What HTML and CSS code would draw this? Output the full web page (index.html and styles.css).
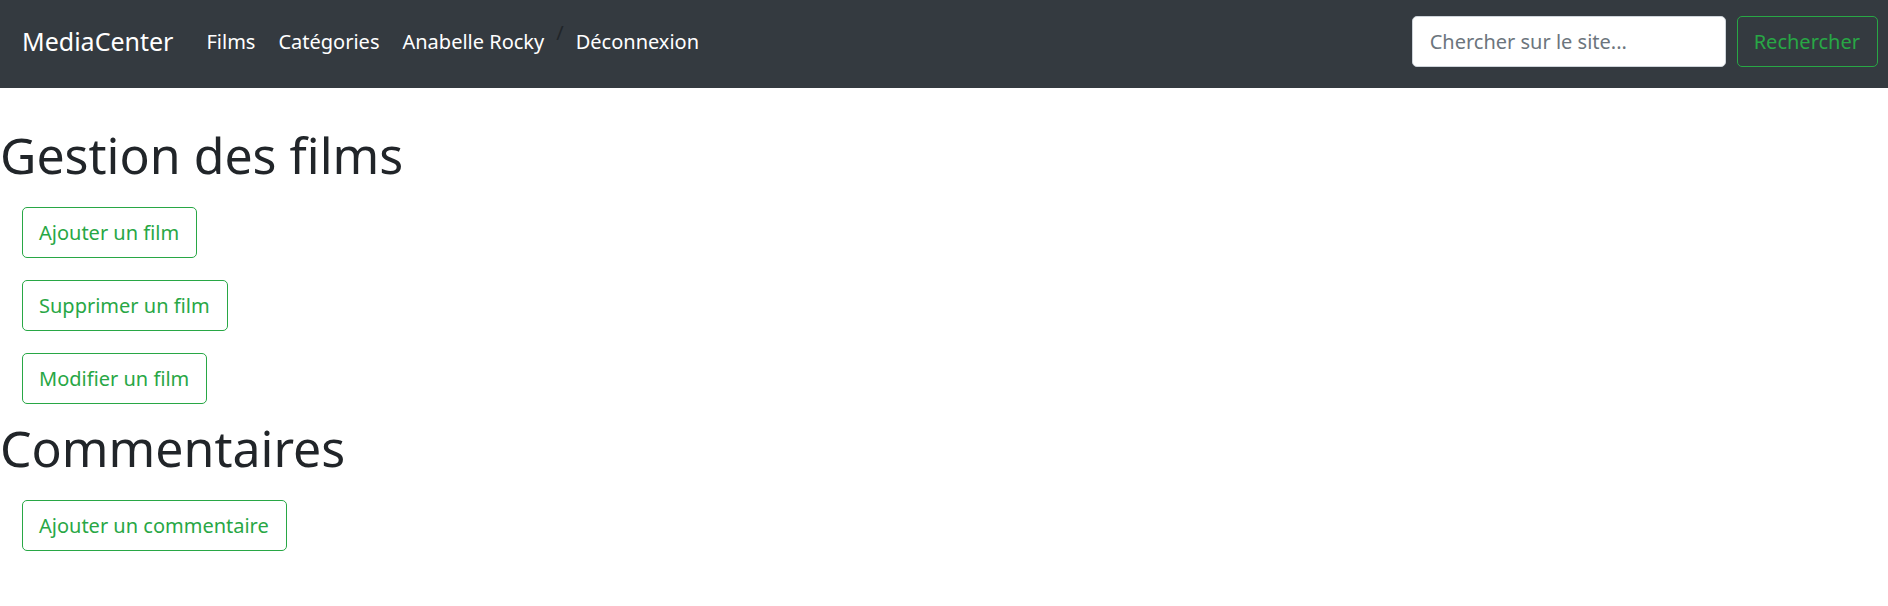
FILE: index.html
```html
<!DOCTYPE html>
<html lang="fr">
<head>
<meta charset="utf-8">
<meta name="viewport" content="width=device-width, initial-scale=1">
<title>MediaCenter</title>
<link rel="stylesheet" href="styles.css">
</head>
<body>
<nav class="navbar">
  <a class="brand" href="#">MediaCenter</a>
  <ul class="nav-list">
    <li><a class="nav-link" href="#">Films</a></li>
    <li><a class="nav-link" href="#">Catégories</a></li>
    <li><a class="nav-link" href="#">Anabelle Rocky</a></li>
    <li class="separator">/</li>
    <li><a class="nav-link" href="#">Déconnexion</a></li>
  </ul>
  <form class="search">
    <input class="search-input" type="search" placeholder="Chercher sur le site..." aria-label="Chercher sur le site">
    <button class="btn" type="submit">Rechercher</button>
  </form>
</nav>
<main class="content">
  <section>
    <h1 class="title">Gestion des films</h1>
    <div class="actions">
      <button class="btn" type="button">Ajouter un film</button>
      <button class="btn" type="button">Supprimer un film</button>
      <button class="btn" type="button">Modifier un film</button>
    </div>
  </section>
  <section>
    <h1 class="title">Commentaires</h1>
    <div class="actions">
      <button class="btn" type="button">Ajouter un commentaire</button>
    </div>
  </section>
</main>
</body>
</html>
```

FILE: styles.css
```css
* {
  box-sizing: border-box;
}

body {
  margin: 0;
  background: #fff;
  color: #212529;
  font-family: "Noto Sans", "Open Sans", sans-serif;
  font-size: 20px;
  line-height: 33px;
}

.navbar {
  display: flex;
  align-items: flex-start;
  padding: 16px 10px 21px 22px;
  background: #343a40;
}

.brand {
  margin-right: 22px;
  padding: 6px 0;
  color: #fff;
  font-size: 25px;
  line-height: 39px;
  text-decoration: none;
}

.nav-list {
  display: flex;
  flex: 1;
  gap: 1px;
  margin: 0;
  padding: 0;
  list-style: none;
}

.nav-link {
  display: block;
  padding: 9px 11px;
  color: #fff;
  text-decoration: none;
}

.search {
  display: flex;
  gap: 11px;
}

.search-input {
  width: 314px;
  height: 51px;
  padding: 8px 17px;
  border: 1px solid #ced4da;
  border-radius: 5px;
  background: #fff;
  color: #495057;
  font: inherit;
}

.search-input::placeholder {
  color: #6c757d;
  opacity: 1;
}

.btn {
  padding: 8px 17px 8px 16px;
  border: 1px solid #28a745;
  border-radius: 5px;
  background: transparent;
  color: #28a745;
  font: inherit;
  cursor: pointer;
}

.content {
  padding-top: 36px;
}

.title {
  margin: 0;
  font-size: 50px;
  font-weight: 400;
  line-height: 62px;
}

.actions {
  display: flex;
  flex-direction: column;
  align-items: flex-start;
  gap: 22px;
  padding: 21px 22px 13px;
}
```
